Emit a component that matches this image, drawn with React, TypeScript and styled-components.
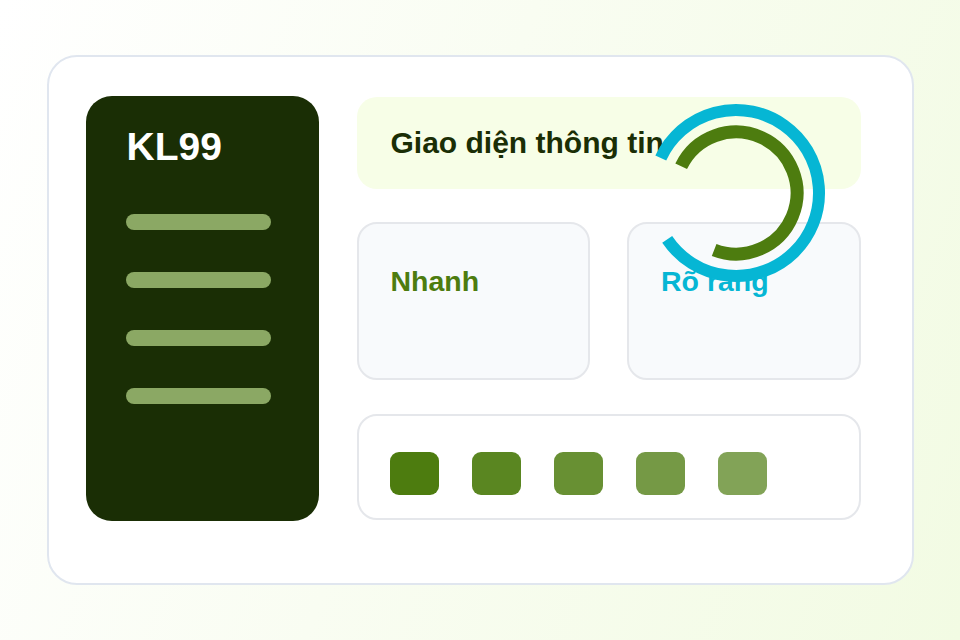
import React from "react";
import styled, { createGlobalStyle } from "styled-components";

const GlobalStyle = createGlobalStyle`
  html, body {
    margin: 0;
    padding: 0;
  }
  body {
    font-family: "Liberation Sans", Arial, sans-serif;
    background: linear-gradient(110deg, #ffffff 0%, #f9fdf2 45%, #f2fbe3 100%);
    min-height: 100vh;
  }
`;

const shades = [1, 0.925, 0.85, 0.775, 0.7];

const App = () => {
  return (
    <>
      <GlobalStyle />
      <Page>
        <Card>
          <Sidebar>
            <Brand>KL99</Brand>
            <Menu>
              {[0, 1, 2, 3].map((i) => (
                <MenuBar key={i} />
              ))}
            </Menu>
          </Sidebar>
          <Main>
            <Header>
              <HeaderTitle>Giao diện thông tin</HeaderTitle>
            </Header>
            <Tiles>
              <Tile>
                <TileTitle $color="#4d7c0f">Nhanh</TileTitle>
              </Tile>
              <Tile>
                <TileTitle $color="#06b6d4">Rõ ràng</TileTitle>
              </Tile>
            </Tiles>
            <Swatches>
              {shades.map((o) => (
                <Swatch key={o} style={{ opacity: o }} />
              ))}
            </Swatches>
            <Ring viewBox="0 0 200 200" width="200" height="200">
              <path
                d="M 24.78 64.92 A 83 83 0 1 1 31.19 146.41"
                fill="none"
                stroke="#06b6d4"
                strokeWidth="12"
              />
              <path
                d="M 45.17 73.26 A 61 61 0 1 1 78.14 156.95"
                fill="none"
                stroke="#4d7c0f"
                strokeWidth="13"
              />
            </Ring>
          </Main>
        </Card>
      </Page>
    </>
  );
};

const Page = styled.div`
  width: 960px;
  height: 640px;
  display: flex;
  align-items: center;
  justify-content: center;
`;

const Card = styled.div`
  box-sizing: border-box;
  width: 867px;
  height: 530px;
  background: #ffffff;
  border: 2px solid #e0e6ef;
  border-radius: 30px;
  padding: 39px 51px 0 37px;
  display: grid;
  grid-template-columns: 233px 1fr;
  column-gap: 38px;
  align-items: start;
`;

const Sidebar = styled.div`
  box-sizing: border-box;
  height: 425px;
  background: #1a2e05;
  border-radius: 26px;
  padding: 28px 40px;
  display: flex;
  flex-direction: column;
`;

const Brand = styled.div`
  color: #ffffff;
  font-size: 39px;
  font-weight: 700;
  line-height: 45px;
  padding-left: 1px;
`;

const Menu = styled.div`
  margin-top: 45px;
  display: flex;
  flex-direction: column;
  gap: 42px;
`;

const MenuBar = styled.div`
  width: 145px;
  height: 16px;
  border-radius: 8px;
  background: #8ba864;
`;

const Main = styled.div`
  position: relative;
  margin-top: 1px;
  display: flex;
  flex-direction: column;
`;

const Header = styled.div`
  height: 92px;
  background: #f7fee7;
  border-radius: 20px;
  padding: 0 34px;
  display: flex;
  align-items: center;
`;

const HeaderTitle = styled.h1`
  margin: 0;
  color: #1a2e05;
  font-size: 30px;
  font-weight: 700;
`;

const Tiles = styled.div`
  margin-top: 33px;
  display: grid;
  grid-template-columns: 1fr 1fr;
  column-gap: 37px;
`;

const Tile = styled.div`
  box-sizing: border-box;
  height: 158px;
  background: #f8fafc;
  border: 2px solid #e5e7eb;
  border-radius: 20px;
  padding: 41px 32px;
`;

const TileTitle = styled.div<{ $color: string }>`
  color: ${(p) => p.$color};
  font-size: 28.5px;
  font-weight: 700;
  line-height: 32px;
`;

const Swatches = styled.div`
  box-sizing: border-box;
  margin-top: 34px;
  height: 106px;
  background: #ffffff;
  border: 2px solid #e5e7eb;
  border-radius: 20px;
  padding: 36px 31px 0;
  display: flex;
  align-items: flex-start;
  gap: 33px;
`;

const Swatch = styled.div`
  width: 49px;
  height: 43px;
  border-radius: 9px;
  background: #4d7c0f;
`;

const Ring = styled.svg`
  position: absolute;
  left: 279px;
  top: -4px;
  pointer-events: none;
`;

export default App;
